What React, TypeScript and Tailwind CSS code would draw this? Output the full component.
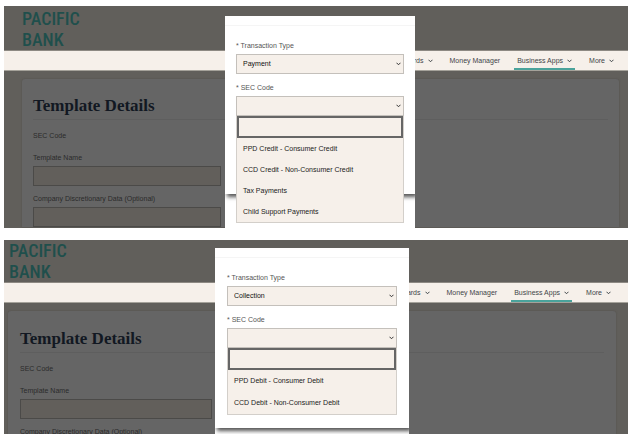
import React from 'react';

type ScreenProps = {
  id: string;
  frame: string;
  header: string;
  nav: string;
  card: string;
  cardBody: string;
  field: string;
  dialog: string;
  dialogBody: string;
  optionHeight: string;
  transactionType: string;
  options: string[];
};

function Chevron({ className }: { className: string }) {
  return (
    <svg viewBox="0 0 10 7" className={className} fill="none" stroke="currentColor" strokeWidth="2" aria-hidden="true">
      <path d="M1 1l4 4 4-4" />
    </svg>
  );
}

function NavItem({ label, menu, active }: { label: string; menu?: boolean; active?: boolean }) {
  return (
    <a
      href="#"
      className={
        'flex items-center gap-[4px] whitespace-nowrap border-b-2 px-[3px] pt-[3px] ' +
        (active ? 'border-[#4aa39b]' : 'border-transparent')
      }
    >
      {label}
      {menu && <Chevron className="h-[4px] w-[5px]" />}
    </a>
  );
}

function DimField({ id, label, width }: { id: string; label: string; width: string }) {
  return (
    <div className="mb-[7px]">
      <label htmlFor={id} className="block h-[14px] text-[7px] leading-[12px] text-[#2b2b2b]">
        {label}
      </label>
      <input id={id} type="text" className={'block h-[20px] border border-[#4b4a48] bg-[#625f5b] px-1 text-[7px] ' + width} />
    </div>
  );
}

function SelectField({ id, label, value }: { id: string; label: string; value: string }) {
  return (
    <div>
      <label htmlFor={id} className="mb-[2px] block text-[7px] leading-[12px] text-[#555]">
        * {label}
      </label>
      <div className="relative">
        <select
          id={id}
          defaultValue={value}
          className="block h-[20px] w-full appearance-none border border-[#c4c0bb] bg-[#f6f0ea] px-[6px] text-[7px] text-[#111]"
        >
          <option value={value}>{value}</option>
        </select>
        <Chevron className="pointer-events-none absolute top-[8px] right-[3px] h-[4px] w-[5px] text-[#333]" />
      </div>
    </div>
  );
}

function Screen(p: ScreenProps) {
  return (
    <section className={'relative overflow-hidden bg-[#615f5b] ' + p.frame}>
      <header className={p.header}>
        <div className="font-['Roboto_Condensed','Liberation_Sans_Narrow','Liberation_Sans',sans-serif] text-[18px] leading-[21px] font-medium text-[#1f4f4c]">
          PACIFIC
          <br />
          BANK
        </div>
      </header>
      <nav
        className={
          'flex h-[21px] justify-end gap-[11px] border-t border-b border-t-[#8d8983] border-b-[#a5a29a] bg-[#f6f0ea] text-[7px] text-[#3f4548] ' +
          p.nav
        }
      >
        <NavItem label="Cards" menu />
        <NavItem label="Money Manager" />
        <NavItem label="Business Apps" menu active />
        <NavItem label="More" menu />
      </nav>
      <main className={'mt-[8px] rounded-t-[3px] bg-[#656565] shadow-[0_0_2px_#504e4b] ' + p.card}>
        <div className={p.cardBody}>
          <h1 className="mb-[10px] border-b border-[#5e5e5e] pb-[3px] font-['Liberation_Serif',serif] text-[17px] leading-[20px] font-bold text-[#121822]">
            Template Details
          </h1>
          <p className="mb-[10px] text-[7px] leading-[12px] text-[#2b2b2b]">SEC Code</p>
          <DimField id={p.id + '-name'} label="Template Name" width={p.field} />
          <DimField id={p.id + '-company'} label="Company Discretionary Data (Optional)" width={p.field} />
        </div>
      </main>

      <div className={'absolute bottom-0 overflow-hidden bg-white ' + p.dialog}>
        <div role="dialog" aria-label="Transaction" className="bg-white shadow-[2px_3px_4px_#555]">
          <div className="h-[10px] border-b border-[#f5f5f5]" />
          <div className={'flex flex-col gap-[7px] pt-[14px] ' + p.dialogBody}>
            <SelectField id={p.id + '-type'} label="Transaction Type" value={p.transactionType} />
            <div className="relative pt-px">
              <SelectField id={p.id + '-sec'} label="SEC Code" value="" />
              <ul
                role="listbox"
                aria-label="SEC Code"
                className="absolute top-full right-0 left-0 border border-t-0 border-[#d3cfca] bg-[#f6f0ea] text-[7px] text-[#222]"
              >
                <li role="option" aria-selected="true" className="h-[22px] border-2 border-[#666]" />
                {p.options.map((o) => (
                  <li key={o} role="option" aria-selected="false" className={'flex items-center px-[6px] pt-px ' + p.optionHeight}>
                    {o}
                  </li>
                ))}
              </ul>
            </div>
          </div>
        </div>
      </div>
    </section>
  );
}

export default function App() {
  return (
    <div className="flex flex-col gap-[12px] bg-white px-[4px] pt-[6px] pb-[7px] font-['Liberation_Sans',Arial,sans-serif]">
      <Screen
        id="payment"
        frame="h-[222px]"
        header="h-[44px] pt-[2px] pl-[18px]"
        nav="pr-[11px]"
        card="mr-[9px] ml-[18px]"
        cardBody="px-[11px] pt-[17px]"
        field="w-[188px]"
        dialog="top-[10px] left-[221px] w-[190px]"
        dialogBody="px-[11px] pb-[78px]"
        optionHeight="h-[21px]"
        transactionType="Payment"
        options={['PPD Credit - Consumer Credit', 'CCD Credit - Non-Consumer Credit', 'Tax Payments', 'Child Support Payments']}
      />
      <Screen
        id="collection"
        frame="h-[194px]"
        header="h-[42px] pl-[5px]"
        nav="pr-[14px]"
        card="mr-[12px] ml-[4px]"
        cardBody="px-[12px] pt-[18px]"
        field="w-[192px]"
        dialog="top-[8px] left-[211px] w-[194px]"
        dialogBody="px-[12px] pb-[80px]"
        optionHeight="h-[22px]"
        transactionType="Collection"
        options={['PPD Debit - Consumer Debit', 'CCD Debit - Non-Consumer Debit']}
      />
    </div>
  );
}
